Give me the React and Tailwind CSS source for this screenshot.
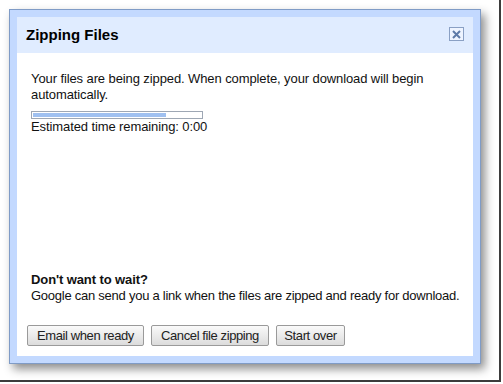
// Diálogo "Zipping Files" dentro del marco con sombra de la captura.
const font = "font-['Liberation_Sans',Arial,sans-serif]";

function DialogButton({ children, className = "" }) {
  return (
    <button
      type="button"
      className={`h-[21px] whitespace-nowrap rounded-[2px] border border-[#9a9a9a] bg-gradient-to-b from-[#fafafa] to-[#dcdcdc] px-[4px] text-[13px] leading-none tracking-[-0.4px] text-[#222] ${className}`}
    >
      {children}
    </button>
  );
}

export default function App() {
  return (
    <div className={`h-[384px] w-[503px] bg-white ${font}`}>
      <div className="h-[382px] w-[501px] border-b-2 border-r-2 border-[#3c3c3c] pl-[9px] pt-[9px]">
        <div className="h-[355px] w-[472px] border border-[#7f9bc6] bg-[#c3d9ff] p-[7px] shadow-[4px_5px_9px_rgba(0,0,0,0.45)]">
          <div className="flex h-full flex-col bg-white">
            <div className="flex h-[36px] items-center justify-between bg-[#e0ecff] pl-[9px] pr-[9px]">
              <span className="text-[15px] font-bold text-black">Zipping Files</span>
              <span className="mb-[2px] flex h-[14px] w-[15px] items-center justify-center border border-[#8aa0c4] bg-[#eef4ff]">
                <svg width="9" height="9" viewBox="0 0 9 9">
                  <path d="M1 1L8 8M8 1L1 8" stroke="#5d7aa8" strokeWidth="2" />
                </svg>
              </span>
            </div>

            <div className="flex flex-1 flex-col px-[14px] pt-[18px] text-[13px] leading-[16px] tracking-[-0.1px] text-[#111]">
              <p>
                Your files are being zipped. When complete, your download will begin
                automatically.
              </p>
              <div className="mt-[8px] h-[8px] w-[172px] border border-[#9ea7b4] bg-white p-[1px]">
                <div className="h-full w-[79%] bg-[#9fc0f0]" />
              </div>
              <p>Estimated time remaining: 0:00</p>

              <div className="mt-auto">
                <p className="font-bold">Don't want to wait?</p>
                <p className="whitespace-nowrap tracking-[-0.25px]">
                  Google can send you a link when the files are zipped and ready for download.
                </p>
              </div>
              <div className="-ml-[4px] mb-[10px] mt-[21px] flex gap-[7px]">
                <DialogButton className="w-[117px]">Email when ready</DialogButton>
                <DialogButton className="w-[118px]">Cancel file zipping</DialogButton>
                <DialogButton className="w-[69px]">Start over</DialogButton>
              </div>
            </div>
          </div>
        </div>
      </div>
    </div>
  );
}
